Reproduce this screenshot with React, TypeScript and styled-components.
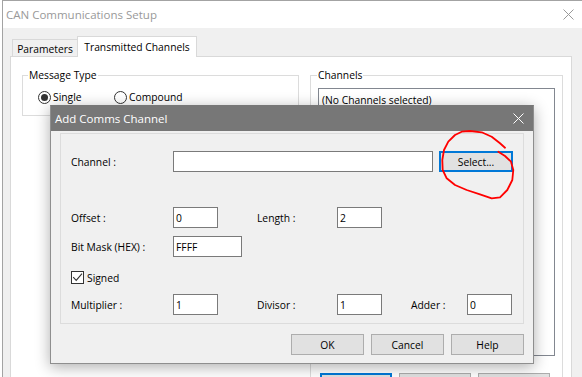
import React from "react";
import styled, { createGlobalStyle } from "styled-components";

const GlobalStyle = createGlobalStyle`
  html, body { margin: 0; padding: 0; background: #ffffff; }
  body {
    font-family: "Open Sans", "Noto Sans", sans-serif;
    font-size: 10.3px;
    color: #000;
  }
  * { box-sizing: border-box; }
`;

const Screen = styled.div`
  position: relative;
  width: 582px;
  height: 377px;
  overflow: hidden;
  background: #ffffff;
  padding-left: 2px;
`;

const MainWindow = styled.div`
  width: 580px;
  height: 377px;
  border-left: 1px solid #a3a3a3;
  border-top: 1px solid #a3a3a3;
  background: #f0f0f0;
  display: flex;
  flex-direction: column;
`;

const TitleBar = styled.div<{ $dark?: boolean }>`
  flex: none;
  height: ${(p) => (p.$dark ? 25 : 27)}px;
  background: ${(p) => (p.$dark ? "#777777" : "#ffffff")};
  color: ${(p) => (p.$dark ? "#ffffff" : "#999999")};
  display: flex;
  align-items: center;
  justify-content: space-between;
  padding-left: ${(p) => (p.$dark ? 4 : 3)}px;
  font-size: 11.5px;
  line-height: 16px;
`;

const CloseBox = styled.div<{ $w: number }>`
  width: ${(p) => p.$w}px;
  height: 100%;
  display: flex;
  align-items: center;
  justify-content: center;
`;

const Client = styled.div`
  flex: 1;
  display: flex;
  flex-direction: column;
  padding: 8px 0 0 7px;
  min-height: 0;
`;

const TabStrip = styled.div`
  display: flex;
  align-items: flex-end;
  height: 20px;
  margin-left: 2px;
`;

const Tab = styled.div<{ $active?: boolean; $w: number }>`
  position: relative;
  width: ${(p) => p.$w}px;
  height: ${(p) => (p.$active ? 21 : 17)}px;
  margin-bottom: ${(p) => (p.$active ? -1 : 0)}px;
  z-index: ${(p) => (p.$active ? 1 : 0)};
  background: ${(p) => (p.$active ? "#ffffff" : "#f0f0f0")};
  border: 1px solid #d9d9d9;
  border-bottom: none;
  border-right: ${(p) => (p.$active ? "1px solid #d9d9d9" : "none")};
  display: flex;
  align-items: center;
  justify-content: center;
  padding-top: ${(p) => (p.$active ? 0 : 1)}px;
  line-height: 14px;
  white-space: nowrap;
`;

const Panel = styled.div`
  flex: 1;
  width: 562px;
  background: #ffffff;
  border: 1px solid #d9d9d9;
  padding: 18px 0 0 11px;
  display: flex;
  align-items: flex-start;
  gap: 11px;
`;

const GroupBox = styled.div<{ $w: number; $h: number; $pl?: number }>`
  width: ${(p) => p.$w}px;
  height: ${(p) => p.$h}px;
  flex: none;
  border: 1px solid #dcdcdc;
  padding-left: ${(p) => p.$pl ?? 0}px;
`;

const GroupLabel = styled.span<{ $ml: number }>`
  display: block;
  width: fit-content;
  margin: -8px 0 0 ${(p) => p.$ml}px;
  padding: 0 1px;
  line-height: 14px;
  background: #ffffff;
  white-space: nowrap;
`;

const RadioRow = styled.div`
  display: flex;
  align-items: center;
  margin-top: 8px;
  height: 14px;
`;

const RadioItem = styled.label<{ $w?: number }>`
  display: flex;
  align-items: center;
  gap: 2px;
  width: ${(p) => (p.$w ? `${p.$w}px` : "auto")};
  line-height: 14px;
`;

const RadioCircle = styled.span<{ $checked?: boolean }>`
  width: 13px;
  height: 13px;
  flex: none;
  border-radius: 50%;
  border: 1px solid #333333;
  background: #ffffff;
  display: flex;
  align-items: center;
  justify-content: center;
  &::after {
    content: "";
    width: 7px;
    height: 7px;
    border-radius: 50%;
    background: ${(p) => (p.$checked ? "#333333" : "transparent")};
  }
`;

const ListBox = styled.div`
  width: 237px;
  height: 268px;
  margin: 6px 0 0 0;
  border: 1px solid #828790;
  background: #ffffff;
  padding: 4px 3px;
  line-height: 14px;
`;

const SmallButtonRow = styled.div`
  display: flex;
  gap: 7px;
  margin: 17px 0 0 2px;
`;

const PushButton = styled.div<{ $w: number; $focus?: boolean }>`
  width: ${(p) => p.$w}px;
  height: 21px;
  flex: none;
  border: ${(p) => (p.$focus ? "2px solid #0078d7" : "1px solid #adadad")};
  background: #e1e1e1;
  display: flex;
  align-items: center;
  justify-content: center;
  line-height: 14px;
  white-space: nowrap;
`;

const Dialog = styled.div`
  position: absolute;
  left: 50px;
  top: 105px;
  width: 484px;
  height: 259px;
  border: 1px solid #8e8e8e;
  border-top-color: #777777;
  background: #f0f0f0;
  box-shadow: 0 3px 14px rgba(0, 0, 0, 0.32);
  display: flex;
  flex-direction: column;
`;

const DialogBody = styled.div`
  padding: 2px 9px 8px 9px;
`;

const InnerGroup = styled.div`
  border: 1px solid #dcdcdc;
  padding: 17px 0 8px 10px;
`;

const Row = styled.div<{ $mt: number }>`
  display: flex;
  align-items: center;
  margin-top: ${(p) => p.$mt}px;
`;

const FieldLabel = styled.span<{ $w: number; $ml?: number }>`
  width: ${(p) => p.$w}px;
  margin-left: ${(p) => p.$ml ?? 0}px;
  flex: none;
  line-height: 14px;
  white-space: nowrap;
`;

const TextBox = styled.div<{ $w: number }>`
  width: ${(p) => p.$w}px;
  height: 21px;
  flex: none;
  border: 1px solid #7a7a7a;
  background: #ffffff;
  padding-left: 2px;
  display: flex;
  align-items: center;
  line-height: 14px;
`;

const SelectButton = styled(PushButton)`
  margin-left: 6px;
`;

const CheckRow = styled.label`
  display: flex;
  align-items: center;
  gap: 3px;
  height: 13px;
  margin-top: 14px;
  line-height: 14px;
`;

const CheckBox = styled.span`
  width: 13px;
  height: 13px;
  flex: none;
  border: 1px solid #333333;
  background: #ffffff;
  display: flex;
  align-items: center;
  justify-content: center;
`;

const ButtonBar = styled.div`
  display: flex;
  justify-content: flex-end;
  gap: 7px;
  margin-top: 10px;
`;

const Annotation = styled.svg`
  position: absolute;
  left: 0;
  top: 0;
  pointer-events: none;
`;

const XIcon = ({ color }: { color: string }) => (
  <svg width="11" height="11" viewBox="0 0 11 11">
    <path d="M0.5 0.5 L10.5 10.5 M10.5 0.5 L0.5 10.5" stroke={color} strokeWidth="1" fill="none" />
  </svg>
);

const circlePoints =
  "505,147.7 500,143.3 491.7,136.7 481.7,132.3 470,131 461.7,131.7 455,135 448.3,141.7 444,150 442.3,160 442.7,170 446.7,178.3 455,185 466.7,190 480,194.3 491.7,198.3 500,197.3 507.3,190 512.3,180 513.3,170 511,161.7 505,156 498.3,151.7";

export default function App() {
  return (
    <>
      <GlobalStyle />
      <Screen>
        <MainWindow>
          <TitleBar>
            <span>CAN Communications Setup</span>
            <CloseBox $w={28}>
              <XIcon color="#999999" />
            </CloseBox>
          </TitleBar>
          <Client>
            <TabStrip>
              <Tab $w={65}>Parameters</Tab>
              <Tab $w={120} $active>
                Transmitted Channels
              </Tab>
            </TabStrip>
            <Panel>
              <GroupBox $w={277} $h={41} $pl={15}>
                <GroupLabel $ml={-10}>Message Type</GroupLabel>
                <RadioRow>
                  <RadioItem $w={76}>
                    <RadioCircle $checked />
                    Single
                  </RadioItem>
                  <RadioItem>
                    <RadioCircle />
                    Compound
                  </RadioItem>
                </RadioRow>
              </GroupBox>
              <GroupBox $w={253} $h={340} $pl={7}>
                <GroupLabel $ml={-1}>Channels</GroupLabel>
                <ListBox>(No Channels selected)</ListBox>
                <SmallButtonRow>
                  <PushButton $w={72} $focus />
                  <PushButton $w={72} />
                  <PushButton $w={72} />
                </SmallButtonRow>
              </GroupBox>
            </Panel>
          </Client>
        </MainWindow>

        <Dialog>
          <TitleBar $dark>
            <span>Add Comms Channel</span>
            <CloseBox $w={30}>
              <XIcon color="#ffffff" />
            </CloseBox>
          </TitleBar>
          <DialogBody>
            <InnerGroup>
              <Row $mt={0}>
                <FieldLabel $w={102}>Channel :</FieldLabel>
                <TextBox $w={260} />
                <SelectButton $w={74} $focus>
                  Select...
                </SelectButton>
              </Row>
              <Row $mt={35}>
                <FieldLabel $w={102}>Offset :</FieldLabel>
                <TextBox $w={45}>0</TextBox>
                <FieldLabel $w={80} $ml={39}>
                  Length :
                </FieldLabel>
                <TextBox $w={45}>2</TextBox>
              </Row>
              <Row $mt={8}>
                <FieldLabel $w={102}>Bit Mask (HEX) :</FieldLabel>
                <TextBox $w={69}>FFFF</TextBox>
              </Row>
              <CheckRow>
                <CheckBox>
                  <svg width="11" height="11" viewBox="0 0 11 11">
                    <polyline points="1.2,5.2 4.2,8.4 10,1.6" stroke="#333333" strokeWidth="1.1" fill="none" />
                  </svg>
                </CheckBox>
                Signed
              </CheckRow>
              <Row $mt={10}>
                <FieldLabel $w={102}>Multiplier :</FieldLabel>
                <TextBox $w={45}>1</TextBox>
                <FieldLabel $w={80} $ml={39}>
                  Divisor :
                </FieldLabel>
                <TextBox $w={45}>1</TextBox>
                <FieldLabel $w={56} $ml={29}>
                  Adder :
                </FieldLabel>
                <TextBox $w={45}>0</TextBox>
              </Row>
            </InnerGroup>
            <ButtonBar>
              <PushButton $w={73}>OK</PushButton>
              <PushButton $w={73}>Cancel</PushButton>
              <PushButton $w={73}>Help</PushButton>
            </ButtonBar>
          </DialogBody>
        </Dialog>

        <Annotation width="582" height="377" viewBox="0 0 582 377">
          <polyline
            points={circlePoints}
            stroke="#ff0000"
            strokeWidth="1.8"
            fill="none"
            strokeLinejoin="round"
            strokeLinecap="round"
          />
        </Annotation>
      </Screen>
    </>
  );
}
